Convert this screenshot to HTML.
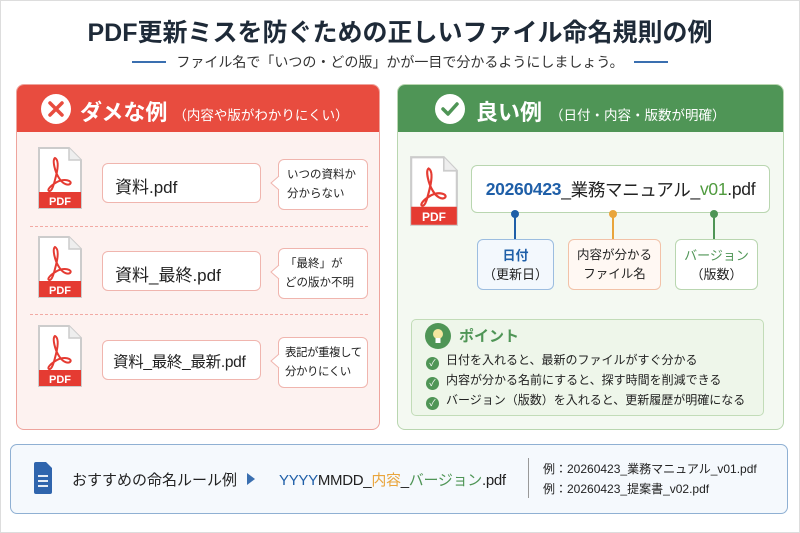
<!DOCTYPE html><html><head><meta charset="utf-8"><style>
*{margin:0;padding:0;box-sizing:border-box}
body{width:800px;height:533px;background:#fff;font-family:"Liberation Sans","Noto Sans CJK JP",sans-serif;position:relative;overflow:hidden;color:#222}
.a{position:absolute;white-space:nowrap}
.box{position:absolute;background:#fff;border-radius:6px;white-space:nowrap}
.c{display:flex;align-items:center;justify-content:center;text-align:center}
</style></head><body>
<div class="a" style="left:0;top:0;width:800px;height:533px;border:1px solid #ddd"></div>
<div class="a c" style="left:0;top:13px;width:800px;font-size:25px;font-weight:bold;color:#1e2a38">PDF更新ミスを防ぐための正しいファイル命名規則の例</div>
<div class="a c" style="left:0;top:52px;width:800px;font-size:14px;color:#333">
<span style="display:inline-block;width:34px;height:1.5px;background:#3a6fb0;margin-right:10px"></span>ファイル名で「いつの・どの版」かが一目で分かるようにしましょう。<span style="display:inline-block;width:34px;height:1.5px;background:#3a6fb0;margin-left:10px"></span></div>

<div class="a" style="left:16px;top:84px;width:364px;height:346px;border:1px solid #eea49d;border-radius:8px;background:#fdf2f0;overflow:hidden">
<div class="a" style="left:0;top:0;width:364px;height:47px;background:#e84c3f"></div>
</div>
<svg class="a" style="left:40px;top:93px" width="32" height="32"><circle cx="16" cy="16" r="15" fill="#fff"/><path d="M10 10L22 22M22 10L10 22" stroke="#e84c3f" stroke-width="3.5" stroke-linecap="round"/></svg>
<div class="a" style="left:80px;top:95px;color:#fff;font-size:22px;font-weight:bold">ダメな例<span style="font-size:13.5px;font-weight:normal;margin-left:6px">（内容や版がわかりにくい）</span></div>
<div class="a" style="left:30px;top:226px;width:338px;border-top:1.5px dashed #f2aaa4"></div>
<div class="a" style="left:30px;top:314px;width:338px;border-top:1.5px dashed #f2aaa4"></div>

<svg width="0" height="0" style="position:absolute"><defs><g id="pdf"><path d="M2 2H32L44 14V62H2Z" fill="#fff" stroke="#ccc" stroke-width="2"/><path d="M32 2V14H44" fill="#eee" stroke="#ccc" stroke-width="1.5"/><path d="M18 12C15 14 18 26 22 32C25 37 30 40 33 38C36 35 28 32 20 36C13 40 10 44 12 45C15 46 17 38 19 30C21 22 22 14 18 12Z" fill="none" stroke="#e53b32" stroke-width="2"/><rect x="2" y="46" width="42" height="16" fill="#e53b32"/></g></defs></svg>
<svg class="a" style="left:37px;top:146px" width="48" height="66"><use href="#pdf"/><text x="23" y="59" fill="#fff" font-size="11" font-weight="bold" text-anchor="middle" font-family="Liberation Sans">PDF</text></svg>
<svg class="a" style="left:37px;top:235px" width="48" height="66"><use href="#pdf"/><text x="23" y="59" fill="#fff" font-size="11" font-weight="bold" text-anchor="middle" font-family="Liberation Sans">PDF</text></svg>
<svg class="a" style="left:37px;top:324px" width="48" height="66"><use href="#pdf"/><text x="23" y="59" fill="#fff" font-size="11" font-weight="bold" text-anchor="middle" font-family="Liberation Sans">PDF</text></svg>

<div class="box" style="left:102px;top:163px;width:159px;height:40px;border:1px solid #f0b5ae;font-size:17px;padding:9px 0 0 12px">資料.pdf</div>
<div class="box" style="left:102px;top:251px;width:159px;height:40px;border:1px solid #f0b5ae;font-size:17px;padding:9px 0 0 12px">資料_最終.pdf</div>
<div class="box" style="left:102px;top:340px;width:159px;height:40px;border:1px solid #f0b5ae;font-size:15.5px;padding:9px 0 0 10px;letter-spacing:-0.3px">資料_最終_最新.pdf</div>

<div class="box" style="left:278px;top:159px;width:90px;height:51px;border:1px solid #f0b5ae;font-size:11.5px;line-height:19px;padding:6px 0 0 8px">いつの資料か<br>分からない</div>
<div class="box" style="left:278px;top:248px;width:90px;height:51px;border:1px solid #f0b5ae;font-size:11.5px;line-height:19px;padding:6px 0 0 6px">「最終」が<br>どの版か不明</div>
<div class="box" style="left:278px;top:337px;width:90px;height:51px;border:1px solid #f0b5ae;font-size:11.5px;line-height:19px;padding:6px 0 0 6px;letter-spacing:-0.5px">表記が重複して<br>分かりにくい</div>
<svg class="a" style="left:270px;top:175px" width="10" height="16"><path d="M9 1L1 8L9 15" fill="#fff" stroke="#f0b5ae"/></svg>
<svg class="a" style="left:270px;top:264px" width="10" height="16"><path d="M9 1L1 8L9 15" fill="#fff" stroke="#f0b5ae"/></svg>
<svg class="a" style="left:270px;top:353px" width="10" height="16"><path d="M9 1L1 8L9 15" fill="#fff" stroke="#f0b5ae"/></svg>

<div class="a" style="left:397px;top:84px;width:387px;height:346px;border:1px solid #b9d6b0;border-radius:8px;background:#f4f9f2;overflow:hidden">
<div class="a" style="left:0;top:0;width:387px;height:47px;background:#4f9556"></div>
</div>
<svg class="a" style="left:434px;top:93px" width="32" height="32"><circle cx="16" cy="16" r="15" fill="#fff"/><path d="M9 16L14 21L23 11" fill="none" stroke="#4f9556" stroke-width="3.5" stroke-linecap="round" stroke-linejoin="round"/></svg>
<div class="a" style="left:476px;top:95px;color:#fff;font-size:22px;font-weight:bold">良い例<span style="font-size:13.5px;font-weight:normal;margin-left:8px">（日付・内容・版数が明確）</span></div>
<svg class="a" style="left:409px;top:155px" width="50" height="72" viewBox="0 0 46 64" preserveAspectRatio="none"><use href="#pdf"/><text x="23" y="58.5" fill="#fff" font-size="11" font-weight="bold" text-anchor="middle" font-family="Liberation Sans">PDF</text></svg>
<div class="box c" style="left:471px;top:165px;width:299px;height:48px;border:1px solid #b9d6b0;font-size:17.5px;letter-spacing:-0.3px;color:#222"><span style="color:#1f5fa8;font-weight:bold">20260423</span>_業務マニュアル_<span style="color:#4f9a3e">v01</span>.pdf</div>
<div class="a" style="left:514px;top:213px;width:2px;height:26px;background:#1f5fa8"></div>
<div class="a" style="left:511px;top:210px;width:8px;height:8px;border-radius:4px;background:#1f5fa8"></div>
<div class="a" style="left:612px;top:213px;width:2px;height:26px;background:#e9a53c"></div>
<div class="a" style="left:609px;top:210px;width:8px;height:8px;border-radius:4px;background:#e9a53c"></div>
<div class="a" style="left:713px;top:213px;width:2px;height:26px;background:#4f9556"></div>
<div class="a" style="left:710px;top:210px;width:8px;height:8px;border-radius:4px;background:#4f9556"></div>
<div class="box c" style="left:477px;top:239px;width:77px;height:51px;border:1px solid #9cbde0;background:#f3f8fd;font-size:13px;line-height:19px"><div><b style="color:#1f5fa8">日付</b><br>（更新日）</div></div>
<div class="box c" style="left:568px;top:239px;width:93px;height:51px;border:1px solid #f2c2a8;background:#fff8f3;font-size:12.5px;line-height:19px"><div>内容が分かる<br>ファイル名</div></div>
<div class="box c" style="left:675px;top:239px;width:83px;height:51px;border:1px solid #b9d6b0;font-size:13px;line-height:19px"><div><span style="color:#4f9556">バージョン</span><br>（版数）</div></div>

<div class="a" style="left:411px;top:319px;width:353px;height:97px;border:1px solid #c2dcb8;border-radius:5px;background:#eef6ea"></div>
<svg class="a" style="left:425px;top:323px" width="26" height="26"><circle cx="13" cy="13" r="13" fill="#4f9556"/><circle cx="13" cy="11" r="5" fill="#f5e7a0"/><rect x="10.5" y="15" width="5" height="5" fill="#fff"/></svg>
<div class="a" style="left:459px;top:325px;color:#4f9556;font-size:15px;font-weight:bold">ポイント</div>
<div class="a" style="left:426px;top:350px;font-size:12px;line-height:20px;color:#222">
<div><span style="display:inline-block;width:13px;height:13px;border-radius:7px;background:#4f9556;color:#fff;font-size:9px;text-align:center;line-height:13px;vertical-align:-2px;margin-right:7px">✓</span>日付を入れると、最新のファイルがすぐ分かる</div>
<div><span style="display:inline-block;width:13px;height:13px;border-radius:7px;background:#4f9556;color:#fff;font-size:9px;text-align:center;line-height:13px;vertical-align:-2px;margin-right:7px">✓</span>内容が分かる名前にすると、探す時間を削減できる</div>
<div><span style="display:inline-block;width:13px;height:13px;border-radius:7px;background:#4f9556;color:#fff;font-size:9px;text-align:center;line-height:13px;vertical-align:-2px;margin-right:7px">✓</span>バージョン（版数）を入れると、更新履歴が明確になる</div>
</div>

<div class="a" style="left:10px;top:444px;width:778px;height:70px;border:1px solid #8fb0d3;border-radius:7px;background:#f5f9fd"></div>
<svg class="a" style="left:34px;top:462px" width="18" height="32"><path d="M2 0H12L18 6V30Q18 32 16 32H2Q0 32 0 30V2Q0 0 2 0Z" fill="#2f65ad"/><path d="M4 14H14M4 19H14M4 24H14" stroke="#fff" stroke-width="1.8"/></svg>
<div class="a" style="left:72px;top:469px;font-size:15px;color:#222">おすすめの命名ルール例</div>
<svg class="a" style="left:246px;top:472px" width="10" height="14"><path d="M1 1L9 7L1 13Z" fill="#3a6fb0"/></svg>
<div class="a" style="left:279px;top:469px;font-size:15px;letter-spacing:-0.3px;color:#222"><span style="color:#1f5fa8">YYYY</span>MMDD_<span style="color:#e9a53c">内容</span>_<span style="color:#4f9556">バージョン</span>.pdf</div>
<div class="a" style="left:528px;top:458px;width:1px;height:40px;background:#999"></div>
<div class="a" style="left:543px;top:459px;font-size:12px;line-height:20px;color:#222">例：20260423_業務マニュアル_v01.pdf<br>例：20260423_提案書_v02.pdf</div>
</body></html>
